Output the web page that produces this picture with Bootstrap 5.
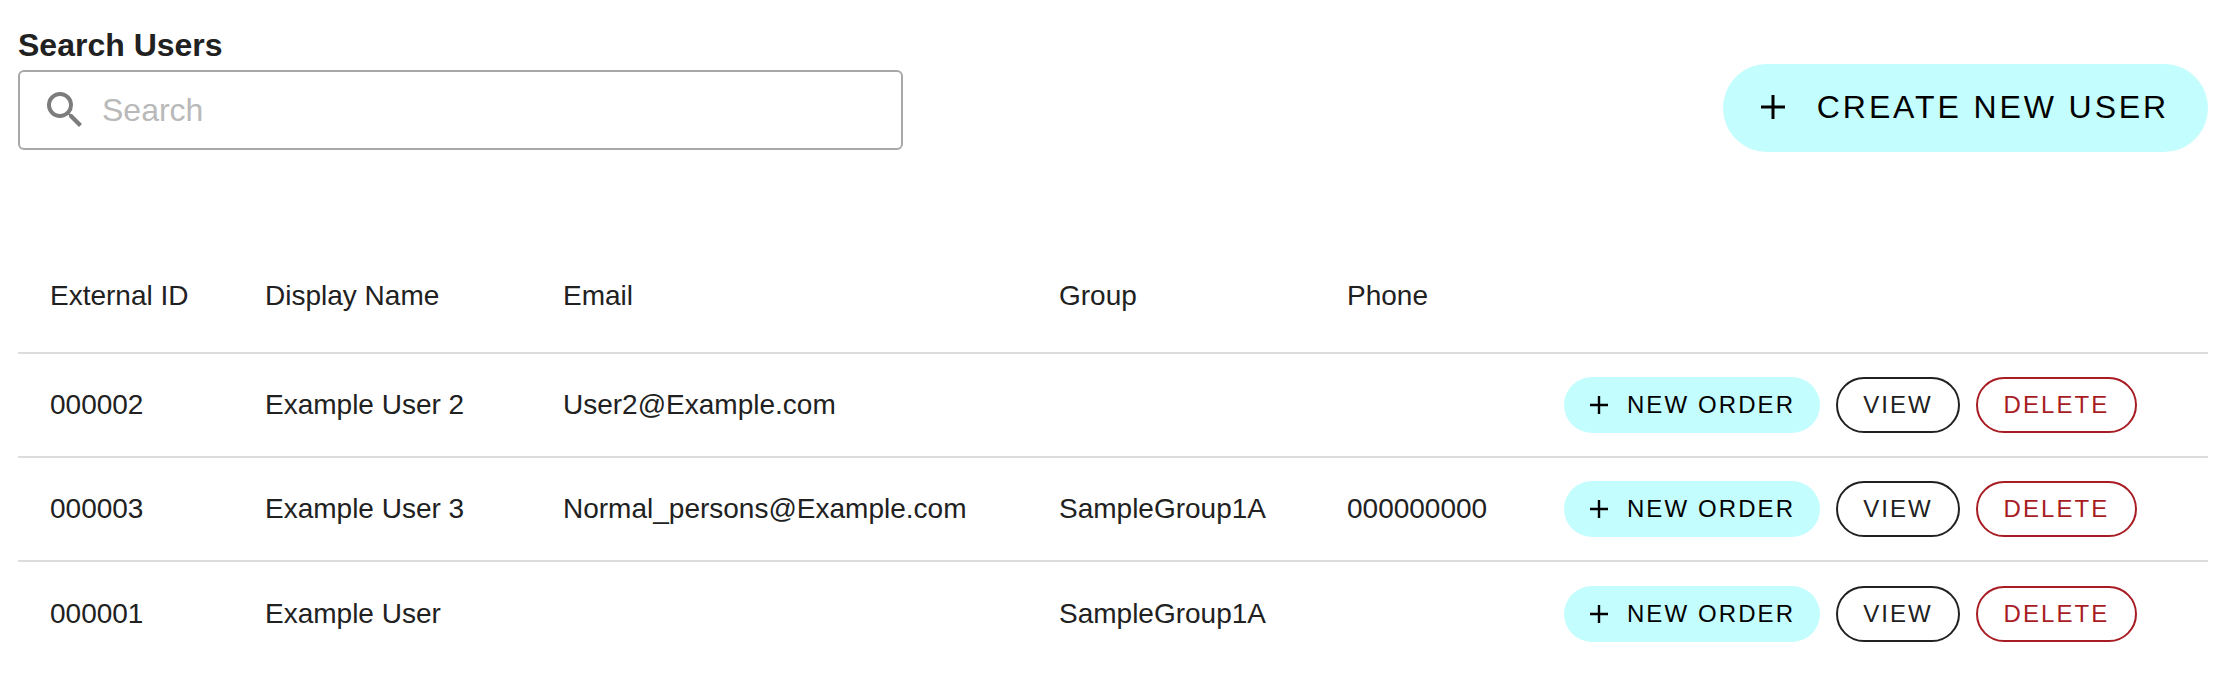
<!DOCTYPE html>
<html lang="en">
<head>
<meta charset="utf-8">
<title>Users</title>
<link href="https://cdn.jsdelivr.net/npm/bootstrap@5.3.0/dist/css/bootstrap.min.css" rel="stylesheet">
<style>
body{font-family:"Liberation Sans",Arial,sans-serif;color:#212121;background:#fff;width:2232px;height:690px;overflow:hidden}
.page-wrap{padding:0 24px 0 18px}
.top-zone{height:249px;padding-top:23px}
.search-label{font-size:32px;line-height:44px;font-weight:700;margin:0 0 3px;display:block;color:#212121;letter-spacing:0}
.search-box{width:885px;height:80px;border:2px solid #a8a8a8;border-radius:6px;padding-left:21px;gap:13px}
.search-box input{border:0;outline:0;flex:1;font:32px "Liberation Sans",Arial,sans-serif;color:#212121;padding:0;background:transparent}
.search-box input::placeholder{color:#b9b9b9;opacity:1}
.create-btn{width:485px;height:88px;margin-top:41px;border-radius:44px;background:#c4fdfe;border:0;color:#000;font-size:32px;line-height:1;letter-spacing:2.9px;gap:30px;padding:0 3px 3px 0;justify-content:center}
.create-btn:hover,.new-btn:hover{background:#c4fdfe;color:#000}
.user-table{table-layout:fixed;width:2190px;margin:0;font-size:28px;color:#212121;--bs-table-color:#212121;--bs-table-border-color:#dcdcdc}
.user-table th,.user-table td{padding:0 0 0 32px;vertical-align:middle;font-weight:400;border-bottom:2px solid #dcdcdc;height:104px}
.user-table tr:last-child td{border-bottom:0}
.user-table thead th{height:104px;padding-bottom:9px}
.w-id{width:215px}.w-name{width:298px}.w-mail{width:496px}.w-grp{width:288px}.w-ph{width:217px}
.act-wrap{gap:16px}
.pill-b{height:56px;border-radius:28px;font-size:24px;letter-spacing:2.1px;padding:0;line-height:1;justify-content:center;background:#fff}
.new-btn{width:256px;background:#c4fdfe;border:0;color:#000;gap:18px}
.view-btn{width:124px;border:2px solid #212121;color:#212121}
.del-btn{width:161px;border:2px solid #a81c24;color:#a81c24}
.view-btn:hover{background:#fff;color:#212121;border-color:#212121}
.del-btn:hover{background:#fff;color:#a81c24;border-color:#a81c24}
</style>
</head>
<body>
<div class="page-wrap">
  <div class="top-zone d-flex justify-content-between align-items-start">
    <div>
      <label class="search-label" for="q">Search Users</label>
      <div class="search-box d-flex align-items-center">
        <svg width="48" height="48" viewBox="0 0 24 24" aria-hidden="true"><path fill="#7c7c7c" d="M15.5 14h-.79l-.28-.27A6.47 6.47 0 0 0 16 9.5 6.5 6.5 0 1 0 9.5 16c1.61 0 3.09-.59 4.23-1.57l.27.28v.79l5 4.99L20.49 19l-4.99-5zm-6 0C7.01 14 5 11.99 5 9.5S7.01 5 9.5 5 14 7.01 14 9.5 11.99 14 9.5 14z"/></svg>
        <input id="q" type="text" placeholder="Search">
      </div>
    </div>
    <button type="button" class="btn create-btn d-flex align-items-center">
      <svg width="28" height="28" viewBox="0 0 28 28" aria-hidden="true"><path d="M14 2v24M2 14h24" stroke="#000" stroke-width="3" fill="none"/></svg>
      <span>CREATE NEW USER</span>
    </button>
  </div>
  <table class="table user-table">
    <colgroup><col class="w-id"><col class="w-name"><col class="w-mail"><col class="w-grp"><col class="w-ph"><col></colgroup>
    <thead><tr><th>External ID</th><th>Display Name</th><th>Email</th><th>Group</th><th>Phone</th><th></th></tr></thead>
    <tbody>
      <tr><td>000002</td><td>Example User 2</td><td>User2@Example.com</td><td></td><td></td>
        <td><div class="d-flex act-wrap"><button type="button" class="btn pill-b new-btn d-flex align-items-center"><svg width="20" height="20" viewBox="0 0 20 20" aria-hidden="true"><path d="M10 1v18M1 10h18" stroke="#000" stroke-width="2.4" fill="none"/></svg><span>NEW ORDER</span></button><button type="button" class="btn pill-b view-btn d-flex align-items-center">VIEW</button><button type="button" class="btn pill-b del-btn d-flex align-items-center">DELETE</button></div></td></tr>
      <tr><td>000003</td><td>Example User 3</td><td>Normal_persons@Example.com</td><td>SampleGroup1A</td><td>000000000</td>
        <td><div class="d-flex act-wrap"><button type="button" class="btn pill-b new-btn d-flex align-items-center"><svg width="20" height="20" viewBox="0 0 20 20" aria-hidden="true"><path d="M10 1v18M1 10h18" stroke="#000" stroke-width="2.4" fill="none"/></svg><span>NEW ORDER</span></button><button type="button" class="btn pill-b view-btn d-flex align-items-center">VIEW</button><button type="button" class="btn pill-b del-btn d-flex align-items-center">DELETE</button></div></td></tr>
      <tr><td>000001</td><td>Example User</td><td></td><td>SampleGroup1A</td><td></td>
        <td><div class="d-flex act-wrap"><button type="button" class="btn pill-b new-btn d-flex align-items-center"><svg width="20" height="20" viewBox="0 0 20 20" aria-hidden="true"><path d="M10 1v18M1 10h18" stroke="#000" stroke-width="2.4" fill="none"/></svg><span>NEW ORDER</span></button><button type="button" class="btn pill-b view-btn d-flex align-items-center">VIEW</button><button type="button" class="btn pill-b del-btn d-flex align-items-center">DELETE</button></div></td></tr>
    </tbody>
  </table>
</div>
<script src="https://cdn.jsdelivr.net/npm/bootstrap@5.3.0/dist/js/bootstrap.bundle.min.js"></script>
</body>
</html>
